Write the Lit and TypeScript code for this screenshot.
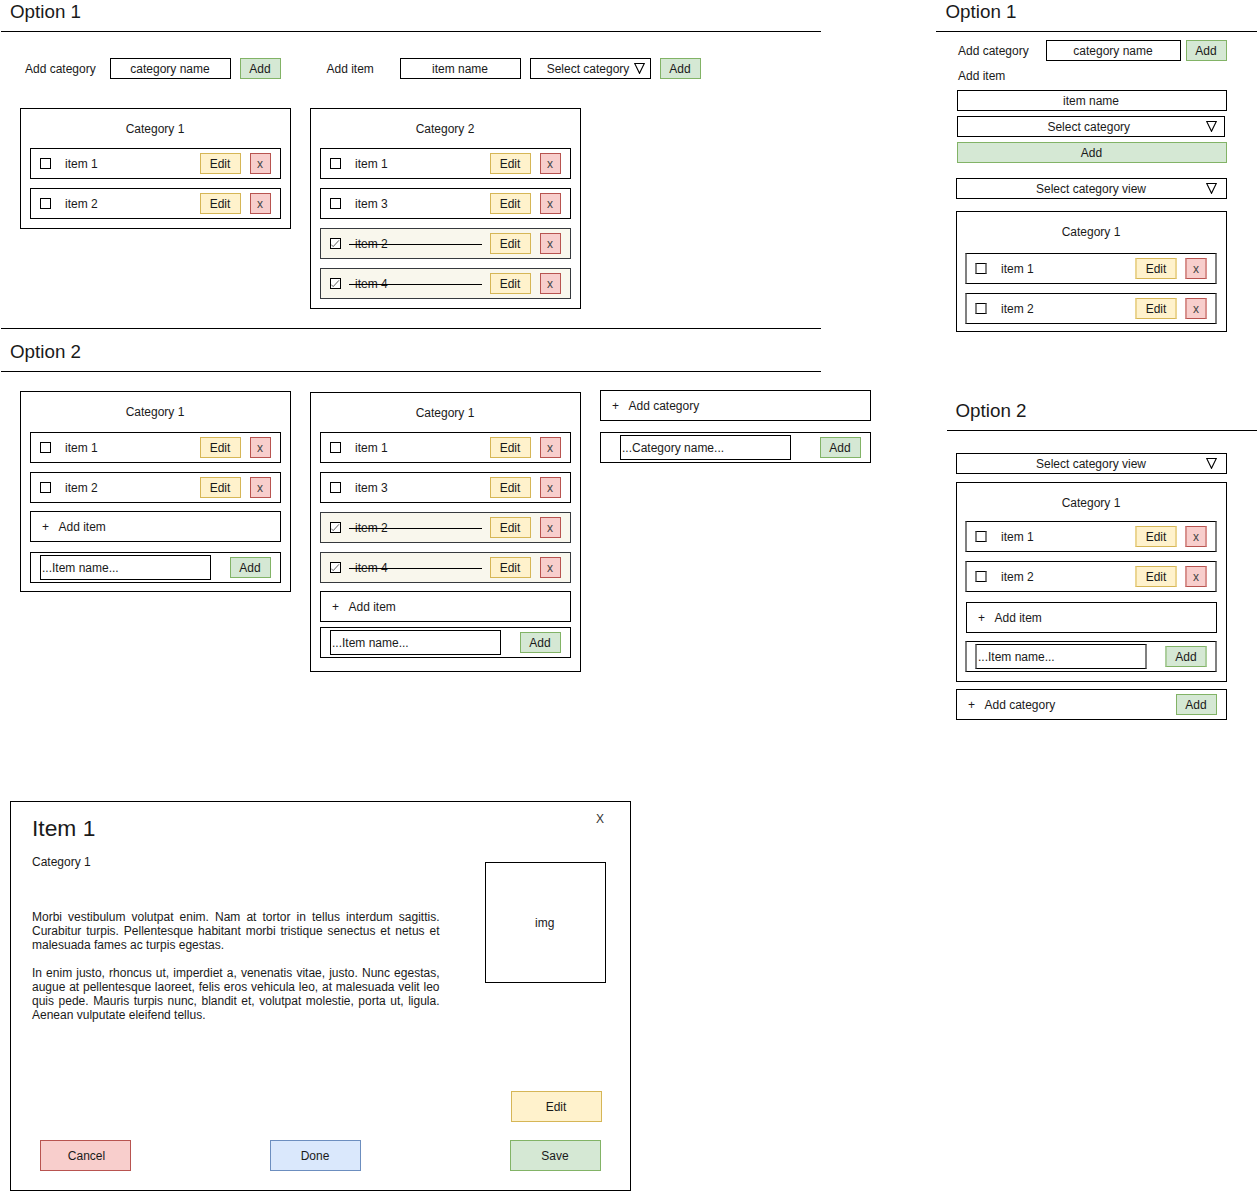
import { LitElement, html, css, svg, nothing } from "lit";
import { customElement } from "lit/decorators.js";
import { classMap } from "lit/directives/class-map.js";

interface Item {
  name: string;
  done?: boolean;
}

const OPEN_ITEMS: Item[] = [{ name: "item 1" }, { name: "item 2" }];
const MIXED_ITEMS: Item[] = [
  { name: "item 1" },
  { name: "item 3" },
  { name: "item 2", done: true },
  { name: "item 4", done: true },
];

const chevron = html`<svg class="tri" width="11" height="11" viewBox="0 0 11 11">
  ${svg`<path d="M0.7 0.5H10.3L5.5 10.3Z" fill="none" stroke="#000" stroke-width="1.1" />`}
</svg>`;

const tick = html`<svg class="tick" width="9" height="9" viewBox="0 0 9 9">
  ${svg`<path d="M0.2 5.6L2.2 7.6L8 1.3" fill="none" stroke="#333" stroke-width="0.8" />`}
</svg>`;

const itemRow = (item: Item, soft = false) => html`
  <div class=${classMap({ row: true, done: !!item.done, soft })}>
    <span class="box check">${item.done ? tick : nothing}</span>
    <span class="name">${item.name}</span>
    ${item.done ? html`<span class="strike"></span>` : nothing}
    <button class="btn yellow edit">Edit</button>
    <button class="btn red del">x</button>
  </div>
`;

const addRow = (label: string, extra: unknown = nothing, cls = "") => html`
  <div class="row add ${cls}"><span class="plus">+</span><span class="label">${label}</span>${extra}</div>
`;

const entryRow = (placeholder: string, cls = "") => html`
  <div class="row entry ${cls}">
    <span class="field">${placeholder}</span>
    <button class="btn green">Add</button>
  </div>
`;

@customElement("app-root")
export class AppRoot extends LitElement {
  static styles = css`
    :host {
      display: block;
      font: 12px/14px "Liberation Sans", Arial, Helvetica, sans-serif;
      color: #1a1a1a;
      background: #fff;
    }
    * {
      box-sizing: border-box;
    }
    .page {
      display: flex;
      width: 1259px;
      height: 1191px;
      overflow: hidden;
    }
    .wide {
      width: 936px;
      flex: none;
    }
    .narrow {
      width: 323px;
      flex: none;
    }
    h2 {
      margin: 0;
      font-weight: 400;
      font-size: 18.8px;
      line-height: 21px;
      height: 32px;
      padding-top: 1px;
      border-bottom: 1px solid #000;
    }
    .wide h2 {
      width: 820px;
      margin-left: 1px;
      padding-left: 9px;
    }
    h2.second {
      height: 44px;
      padding-top: 12px;
      border-top: 1px solid #000;
      margin-top: 19px;
    }
    .bar {
      display: flex;
      height: 21px;
    }
    .wide .bar {
      margin-top: 26px;
    }
    .caption {
      padding-top: 4px;
      white-space: nowrap;
    }
    .box,
    .btn,
    .select {
      border: 1px solid #000;
      background: #fff;
      height: 21px;
      padding: 3px 1px 0 0;
      text-align: center;
      flex: none;
    }
    .btn {
      width: 41px;
      font: inherit;
      color: #1a1a1a;
      display: block;
      border-radius: 0;
      line-height: 14px;
      padding: 1px 1px 0 0;
    }
    .green {
      background: #d5e8d4;
      border-color: #82b366;
    }
    .yellow {
      background: #fff2cc;
      border-color: #d6b656;
    }
    .red {
      background: #f8cecc;
      border-color: #b85450;
    }
    .blue {
      background: #dae8fc;
      border-color: #6c8ebf;
    }
    .select {
      display: flex;
      padding: 3px 9px 0 0;
    }
    .select .text {
      flex: 1;
    }
    .tri {
      display: block;
      margin-top: 1px;
    }
    .bar .caption.cat {
      width: 85px;
      margin-left: 25px;
    }
    .bar .caption.item {
      width: 73.5px;
      margin-left: 45.5px;
    }
    .w121 {
      width: 121px;
    }
    .gap {
      margin-left: 9px;
    }
    .bar .select {
      padding: 3px 5px 0 0;
    }
    .bar .select .text {
      padding-left: 11px;
    }
    .cards {
      display: flex;
      align-items: flex-start;
      gap: 19px;
      padding-left: 20px;
      margin-top: 29px;
    }
    .second + .cards {
      margin-top: 18px;
    }
    .card {
      width: 271px;
      border: 1px solid #000;
      padding: 0 9px 9px;
      display: flex;
      flex-direction: column;
      gap: 9px;
    }
    .title {
      height: 30px;
      padding: 13px 1px 0 0;
      text-align: center;
    }
    .row {
      position: relative;
      display: flex;
      height: 31px;
      border: 1px solid #000;
      padding: 4px 9px 0;
      background: #fff;
      flex: none;
    }
    .check {
      width: 11px;
      height: 11px;
      margin-top: 5px;
      padding: 0;
    }
    .tick {
      display: block;
    }
    .name {
      padding: 4px 0 0 14px;
      flex: 1;
      white-space: nowrap;
    }
    .del {
      width: 21px;
      margin-left: 9px;
      color: #444;
    }
    .row.done {
      background: #f9f7ed;
      border-color: #36393d;
    }
    .strike {
      position: absolute;
      left: 28px;
      top: 15px;
      width: 133px;
      height: 1px;
      background: #000;
    }
    .add {
      padding-left: 11px;
    }
    .plus {
      width: 16.5px;
      padding-top: 4px;
    }
    .label {
      padding-top: 4px;
      flex: 1;
    }
    .field {
      width: 171px;
      height: 25px;
      margin-top: -2px;
      border: 1px solid #000;
      padding: 5px 0 0 1px;
    }
    .entry {
      justify-content: space-between;
    }
    .first2 {
      margin-top: 1px;
      padding-bottom: 8px;
    }
    .first2 .title {
      height: 31px;
    }
    .first2 .add,
    .second2 .add {
      margin-top: -1px;
    }
    .first2 .entry {
      margin-top: 1px;
    }
    .second2 {
      margin-top: 2px;
      padding-bottom: 13px;
    }
    .second2 .entry {
      margin-top: -4px;
    }
    .third2 {
      width: 271px;
      display: flex;
      flex-direction: column;
      gap: 11px;
    }
    .third2 .entry {
      padding-left: 19px;
    }

    /* Narrow layout */
    .narrow h2 {
      width: 321px;
      padding-left: 9.5px;
    }
    .narrow h2.view2 {
      width: 310px;
      margin: 66px 0 22px 11px;
      padding: 2px 0 0 8.5px;
      height: 33px;
    }
    .stack {
      display: flex;
      flex-direction: column;
      padding-left: 20px;
      width: 291px;
    }
    .narrow .bar {
      margin: 8px 0 0 22px;
    }
    .narrow .bar .caption.cat {
      width: 88px;
      margin-left: 0;
    }
    .w135 {
      width: 135px;
      margin-right: 5px;
    }
    .itemcap {
      padding: 8px 0 7px 2px;
    }
    .form {
      display: flex;
      flex-direction: column;
      gap: 5px;
      padding-left: 1px;
    }
    .form .box {
      padding-right: 2px;
    }
    .form .btn {
      width: auto;
    }
    .form .select {
      width: 268px;
      padding-right: 7px;
    }
    .form .select .text {
      padding-left: 13.5px;
    }
    .view .text {
      padding-left: 19px;
    }
    .view {
      margin-top: 15px;
    }
    .narrow .card {
      padding: 0 9px 7px 8px;
      margin-top: 12px;
    }
    .narrow .title {
      height: 32px;
      padding-right: 0;
    }
    .soft {
      border-left: 2px solid #808080;
      border-right: 2px solid #808080;
      padding-left: 8px;
      padding-right: 8px;
      width: 252px;
    }
    .soft .field {
      border-left: 2px solid #808080;
      border-right: 2px solid #808080;
      width: 172px;
    }
    .soft .check {
      width: 12px;
      border-left: 2px solid #808080;
      border-right: 2px solid #808080;
    }
    .soft .name {
      padding-left: 14px;
    }
    .soft .btn {
      width: 42px;
      border-left-width: 2px;
      border-right-width: 2px;
      padding-right: 0;
    }
    .soft .del {
      width: 22px;
      margin-left: 8px;
    }
    .soft .yellow {
      border-left-color: #ebd591;
      border-right-color: #ebd591;
    }
    .soft .red {
      border-left-color: #d8918e;
      border-right-color: #d8918e;
    }
    .soft .green {
      border-left-color: #acce9d;
      border-right-color: #acce9d;
    }
    .narrow .view2card {
      margin-top: 8px;
      padding-bottom: 9px;
    }
    .view2card .title {
      height: 29px;
    }
    .view2card .add {
      margin: 1px 0 -1px 1px;
    }
    .view2 + .stack .view {
      margin-top: 0;
    }
    .outer {
      margin-top: 7px;
    }

    /* Detail dialog */
    .dialog {
      width: 621px;
      height: 390px;
      margin: 129px 0 0 10px;
      border: 1px solid #000;
      display: grid;
      grid-template-columns: 452px 1fr;
      grid-template-rows: 289px 49px 1fr;
      padding-left: 21px;
    }
    h1 {
      margin: 0;
      font-weight: 400;
      font-size: 22.8px;
      line-height: 26px;
      padding-top: 13px;
    }
    .dialog .cat {
      padding-top: 14px;
    }
    .body {
      width: 407.5px;
      padding-top: 41px;
      text-align: justify;
    }
    .body p {
      margin: 0 0 14px;
    }
    .close {
      padding: 10px 0 0 112px;
      color: #333;
    }
    .img {
      width: 121px;
      height: 121px;
      border: 1px solid #000;
      margin: 36px 0 0 1px;
      padding: 53px 1.5px 0 0;
      text-align: center;
    }
    .big {
      width: 91px;
      height: 31px;
    }
    .dialog .edit2 {
      grid-column: 2;
      margin-left: 27px;
    }
    .actions {
      grid-column: 1 / 3;
      display: flex;
      padding-left: 8px;
    }
    .cancel {
      padding: 1px 0 0 2px;
    }
    .finish {
      margin: 0 149px 0 139px;
    }
  `;

  private wide() {
    return html`
      <section class="wide">
        <h2>Option 1</h2>
        <div class="bar">
          <span class="caption cat">Add category</span>
          <span class="box w121">category name</span>
          <button class="btn green gap">Add</button>
          <span class="caption item">Add item</span>
          <span class="box w121">item name</span>
          <span class="select w121 gap"><span class="text">Select category</span>${chevron}</span>
          <button class="btn green gap">Add</button>
        </div>
        <div class="cards">
          <div class="card"><div class="title">Category 1</div>${OPEN_ITEMS.map((i) => itemRow(i))}</div>
          <div class="card"><div class="title">Category 2</div>${MIXED_ITEMS.map((i) => itemRow(i))}</div>
        </div>
        <h2 class="second">Option 2</h2>
        <div class="cards">
          <div class="card first2">
            <div class="title">Category 1</div>
            ${OPEN_ITEMS.map((i) => itemRow(i))} ${addRow("Add item")} ${entryRow("...Item name...")}
          </div>
          <div class="card second2">
            <div class="title">Category 1</div>
            ${MIXED_ITEMS.map((i) => itemRow(i))} ${addRow("Add item")} ${entryRow("...Item name...")}
          </div>
          <div class="third2">${addRow("Add category")} ${entryRow("...Category name...")}</div>
        </div>
        ${this.dialog()}
      </section>
    `;
  }

  private dialog() {
    return html`
      <div class="dialog">
        <div>
          <h1>Item 1</h1>
          <div class="cat">Category 1</div>
          <div class="body">
            <p>
              Morbi vestibulum volutpat enim. Nam at tortor in tellus interdum sagittis. Curabitur turpis. Pellentesque
              habitant morbi tristique senectus et netus et malesuada fames ac turpis egestas.
            </p>
            <p>
              In enim justo, rhoncus ut, imperdiet a, venenatis vitae, justo. Nunc egestas, augue at pellentesque
              laoreet, felis eros vehicula leo, at malesuada velit leo quis pede. Mauris turpis nunc, blandit et,
              volutpat molestie, porta ut, ligula. Aenean vulputate eleifend tellus.
            </p>
          </div>
        </div>
        <div>
          <div class="close">X</div>
          <div class="img">img</div>
        </div>
        <button class="btn yellow big edit2">Edit</button>
        <div class="actions">
          <button class="btn red big cancel">Cancel</button>
          <button class="btn blue big finish">Done</button>
          <button class="btn green big">Save</button>
        </div>
      </div>
    `;
  }

  private narrow() {
    return html`
      <section class="narrow">
        <h2>Option 1</h2>
        <div class="bar">
          <span class="caption cat">Add category</span>
          <span class="box w135">category name</span>
          <button class="btn green">Add</button>
        </div>
        <div class="stack">
          <div class="itemcap">Add item</div>
          <div class="form">
            <span class="box">item name</span>
            <span class="select"><span class="text">Select category</span>${chevron}</span>
            <button class="btn green">Add</button>
          </div>
          <span class="select view"><span class="text">Select category view</span>${chevron}</span>
          <div class="card"><div class="title">Category 1</div>${OPEN_ITEMS.map((i) => itemRow(i, true))}</div>
        </div>
        <h2 class="view2">Option 2</h2>
        <div class="stack">
          <span class="select view"><span class="text">Select category view</span>${chevron}</span>
          <div class="card view2card">
            <div class="title">Category 1</div>
            ${OPEN_ITEMS.map((i) => itemRow(i, true))} ${addRow("Add item")} ${entryRow("...Item name...", "soft")}
          </div>
          ${addRow("Add category", html`<button class="btn green">Add</button>`, "outer")}
        </div>
      </section>
    `;
  }

  render() {
    return html`<main class="page">${this.wide()} ${this.narrow()}</main>`;
  }
}
